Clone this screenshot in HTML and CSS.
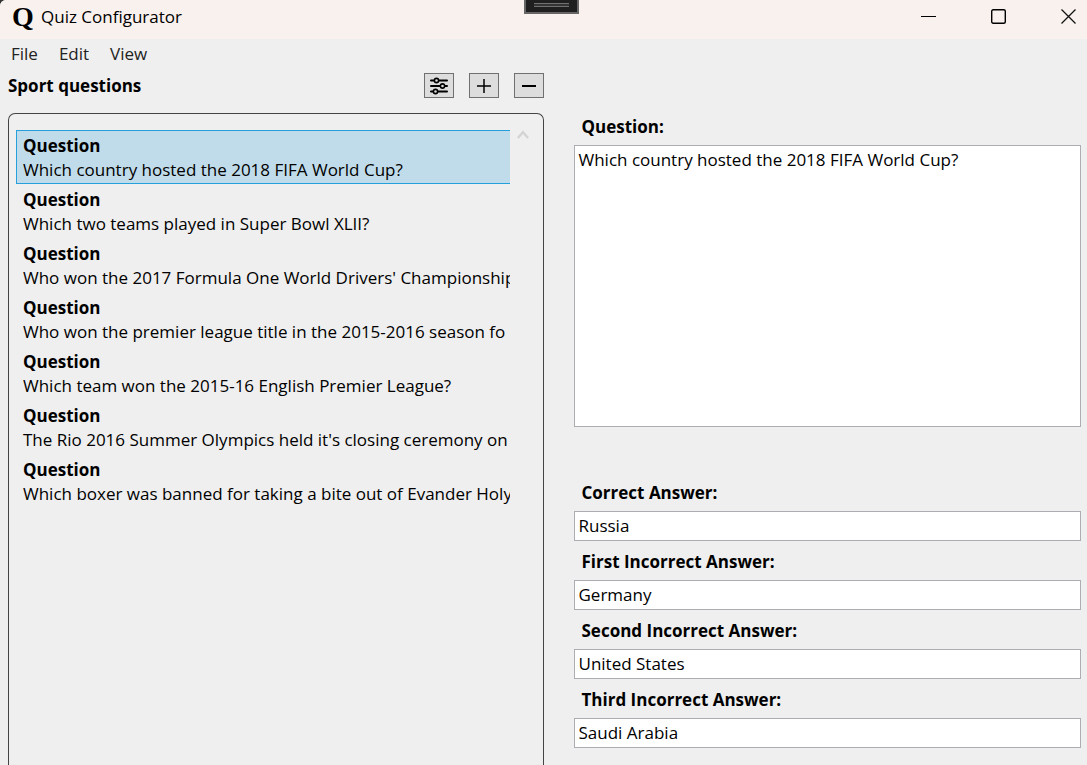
FILE: index.html
```
<!DOCTYPE html>
<html lang="en">
<head>
<meta charset="utf-8">
<meta name="viewport" content="width=device-width, initial-scale=1">
<title>Quiz Configurator</title>
<link rel="stylesheet" href="styles.css">
</head>
<body>
<div class="window">
  <header class="titlebar">
    <span class="logo" aria-hidden="true">Q</span>
    <h1 class="app-name">Quiz Configurator</h1>
    <div class="window-controls">
      <button class="window-button" type="button" aria-label="Minimize">
        <svg width="16" height="16" viewBox="0 0 16 16"><path d="M0 7.500H15" stroke="#000" fill="none"/></svg>
      </button>
      <button class="window-button" type="button" aria-label="Maximize">
        <svg width="16" height="16" viewBox="0 0 16 16"><rect x=".7" y=".7" width="13.600" height="13.600" rx="1.500" stroke="#000" stroke-width="1.400" fill="none"/></svg>
      </button>
      <button class="window-button" type="button" aria-label="Close">
        <svg width="16" height="16" viewBox="0 0 16 16"><path d="M.5.500 14.500 14.500M14.500.500.500 14.500" stroke="#111" stroke-width="1.300" fill="none"/></svg>
      </button>
    </div>
    <div class="grip" aria-hidden="true"><span class="grip-lines"></span></div>
  </header>

  <nav class="menubar">
    <button class="menu-item" type="button">File</button>
    <button class="menu-item" type="button">Edit</button>
    <button class="menu-item" type="button">View</button>
  </nav>

  <main class="content">
    <section class="pack">
      <div class="pack-header">
        <h2 class="pack-title">Sport questions</h2>
        <button class="tool-button" type="button" aria-label="Pack options">
          <svg width="20" height="18" viewBox="0 0 20 18" stroke="#000" stroke-width="2" fill="none" stroke-linecap="round">
            <path d="M2 3.500H5M10 3.500H18M2 9H11M16 9H18M2 14.500H4M9 14.500H18"/>
            <g stroke-width="1.600"><circle cx="7.500" cy="3.500" r="2.100"/><circle cx="13.500" cy="9" r="2.100"/><circle cx="6.500" cy="14.500" r="2.100"/></g>
          </svg>
        </button>
        <button class="tool-button" type="button" aria-label="Add question">
          <svg width="16" height="16" viewBox="0 0 16 16"><path d="M1 8H15M8 1V15" stroke="#000" stroke-width="1.500" fill="none"/></svg>
        </button>
        <button class="tool-button" type="button" aria-label="Remove question">
          <svg width="16" height="16" viewBox="0 0 16 16"><path d="M1 8H15" stroke="#000" stroke-width="2" fill="none"/></svg>
        </button>
      </div>
      <div class="list-frame">
        <ul class="question-list">
          <li><button class="question selected" type="button"><strong>Question</strong><span>Which country hosted the 2018 FIFA World Cup?</span></button></li>
          <li><button class="question" type="button"><strong>Question</strong><span>Which two teams played in Super Bowl XLII?</span></button></li>
          <li><button class="question" type="button"><strong>Question</strong><span>Who won the 2017 Formula One World Drivers' Championship</span></button></li>
          <li><button class="question" type="button"><strong>Question</strong><span>Who won the premier league title in the 2015-2016 season fo</span></button></li>
          <li><button class="question" type="button"><strong>Question</strong><span>Which team won the 2015-16 English Premier League?</span></button></li>
          <li><button class="question" type="button"><strong>Question</strong><span>The Rio 2016 Summer Olympics held it's closing ceremony on</span></button></li>
          <li><button class="question" type="button"><strong>Question</strong><span>Which boxer was banned for taking a bite out of Evander Holy</span></button></li>
        </ul>
        <div class="scroll-track">
          <button class="scroll-up" type="button" aria-label="Scroll up">
            <svg width="12" height="10" viewBox="0 0 12 10"><path d="M.8 8 6 2.200 11.200 8" stroke="#d3d3d3" stroke-width="2.200" fill="none"/></svg>
          </button>
        </div>
      </div>
    </section>

    <form class="editor">
      <div class="field field-question">
        <label for="question">Question:</label>
        <textarea id="question">Which country hosted the 2018 FIFA World Cup?</textarea>
      </div>
      <div class="field">
        <label for="correct">Correct Answer:</label>
        <input id="correct" type="text" value="Russia">
      </div>
      <div class="field">
        <label for="wrong1">First Incorrect Answer:</label>
        <input id="wrong1" type="text" value="Germany">
      </div>
      <div class="field">
        <label for="wrong2">Second Incorrect Answer:</label>
        <input id="wrong2" type="text" value="United States">
      </div>
      <div class="field">
        <label for="wrong3">Third Incorrect Answer:</label>
        <input id="wrong3" type="text" value="Saudi Arabia">
      </div>
    </form>
  </main>
</div>
</body>
</html>
```
FILE: styles.css
```
* { box-sizing: border-box; }

body {
  margin: 0;
  background: #333;
  color: #000;
  font: 17px/24px "Segoe UI", "Open Sans", "Noto Sans", sans-serif;
}

button, input, textarea { font: inherit; color: inherit; border-radius: 0; }
svg { display: block; }

.window {
  display: flex;
  flex-direction: column;
  height: 100vh;
  min-height: 620px;
  overflow: hidden;
  background: #efefef;
  border-top-left-radius: 6px;
}

.titlebar {
  position: relative;
  display: flex;
  align-items: center;
  flex: none;
  height: 39px;
  padding: 0 10px 6px 12px;
  background: #f9f1ed;
}
.logo {
  width: 29px;
  font: bold 28px/28px "Liberation Serif", serif;
}
.app-name { margin: 0; font-size: 17px; font-weight: 400; }
.window-controls { display: flex; gap: 54px; margin-left: auto; }
.window-button { padding: 0; border: 0; background: none; }

.grip {
  position: absolute;
  top: 0;
  left: calc(50% - 20px);
  width: 55px;
  height: 14px;
  padding: 3px 8px;
  border: 2px solid #666;
  border-top: 0;
  background: #1f1f1f;
}
.grip-lines {
  display: block;
  height: 4px;
  border: solid #707070;
  border-width: 1px 0;
  background: #333;
}

.menubar {
  display: flex;
  gap: 21px;
  flex: none;
  height: 30px;
  padding: 3px 11px;
}
.menu-item { padding: 0; border: 0; background: none; color: #222; }

.content {
  display: grid;
  grid-template-columns: minmax(0, 1fr) minmax(0, 1fr);
  flex: 1;
  min-height: 0;
}

.pack {
  display: flex;
  flex-direction: column;
  min-height: 0;
  padding: 4px 0 0 8px;
}
.pack-header {
  display: flex;
  align-items: center;
  gap: 15px;
  margin-bottom: 15px;
}
.pack-title {
  flex: 1;
  margin: 0;
  padding-top: 1px;
  font-size: 17px;
  font-weight: 700;
}
.tool-button {
  display: flex;
  align-items: center;
  justify-content: center;
  width: 30px;
  height: 25px;
  padding: 0;
  border: 1px solid #707070;
  background: #ddd;
}

.list-frame {
  display: flex;
  flex: 1;
  min-height: 0;
  padding: 16px 14px 0 7px;
  border: 1px solid #444;
  border-bottom: 0;
  border-radius: 7px 7px 0 0;
}
.question-list {
  flex: 1;
  min-width: 0;
  margin: 0;
  padding: 0;
  list-style: none;
  overflow: hidden;
}
.question {
  display: block;
  width: 100%;
  height: 54px;
  padding: 3px 0 1px 6px;
  border: 1px solid transparent;
  border-right: 0;
  background: none;
  text-align: left;
  white-space: nowrap;
  overflow: hidden;
}
.question strong, .question span { display: block; }
.selected { border-color: #26a0da; background: #c0dcea; }
.scroll-track { flex: none; padding-left: 7px; }
.scroll-up { display: block; padding: 0; border: 0; background: none; }

.editor {
  display: flex;
  flex-direction: column;
  min-height: 0;
  padding: 37px 6px 17px 30px;
}
.field {
  display: flex;
  flex-direction: column;
  flex: none;
  gap: 6px;
  padding-top: 9px;
}
.field-question { flex: 1; min-height: 0; margin-bottom: 45px; }
.field label { padding-left: 8px; font-weight: 700; }
.field input, .field textarea {
  width: 100%;
  margin: 0;
  padding: 0 4px 2px;
  border: 1px solid #abadb3;
  background: #fff;
  outline: 0;
}
.field input { height: 30px; }
.field textarea { flex: 1; min-height: 0; padding-top: 2px; resize: none; }
```
